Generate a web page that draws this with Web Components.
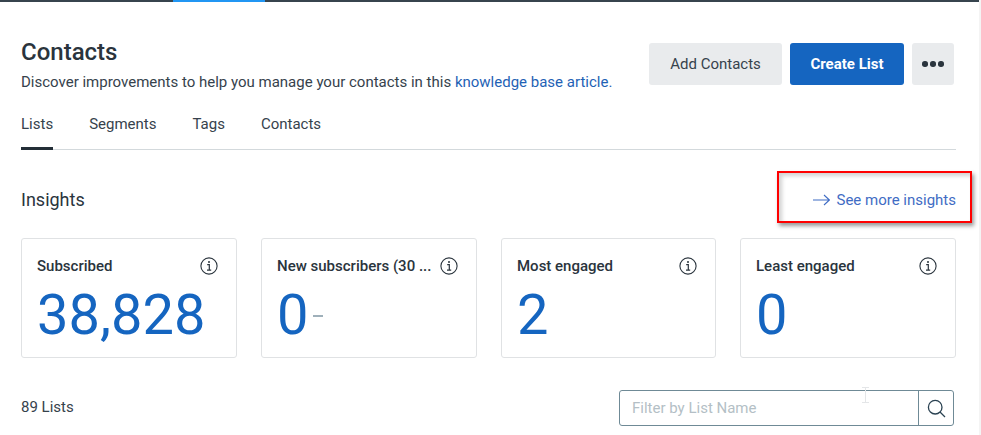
<!DOCTYPE html>
<html>
<head>
<meta charset="utf-8">
<title>Contacts</title>
<style>
  html, body { margin: 0; padding: 0; background: #fff; height: 435px; overflow: hidden; }
  body { font-family: Roboto, "Liberation Sans", sans-serif; color: #2a343d; }
</style>
</head>
<body>
<contacts-page></contacts-page>

<script>
// top strip with the active blue part
class TopStrip extends HTMLElement {
  constructor() {
    super();
    this.attachShadow({ mode: 'open' });
    this.shadowRoot.innerHTML = `
      <style>
        :host { display: flex; height: 2px; background: #37444e; }
        .lead { width: 173px; }
        .active { width: 92px; background: #2196f3; }
      </style>
      <div class="lead"></div><div class="active"></div>
    `;
  }
}
customElements.define('top-strip', TopStrip);

class ActionButton extends HTMLElement {
  constructor() {
    super();
    this.attachShadow({ mode: 'open' });
    this.shadowRoot.innerHTML = `
      <style>
        :host {
          display: flex; align-items: center; justify-content: center;
          height: 42px; box-sizing: border-box; border-radius: 3px;
          background: #e9ebed; color: #36424c; font-size: 15px;
        }
        :host([primary]) { background: #1565c0; color: #fff; font-weight: 700; }
      </style>
      <slot></slot>
    `;
  }
}
customElements.define('action-button', ActionButton);

class TabBar extends HTMLElement {
  constructor() {
    super();
    this.attachShadow({ mode: 'open' });
    this.shadowRoot.innerHTML = `
      <style>
        :host { display: flex; gap: 36px; border-bottom: 1px solid #d3d9dc; font-size: 15px; color: #36424c; height: 44px; box-sizing: border-box; }
        ::slotted(span) { display: block; height: 43px; box-sizing: border-box; padding-top: 8px; line-height: 20px; }
        ::slotted(.on) { border-bottom: 3px solid #232e37; height: 44px; }
      </style>
      <slot></slot>
    `;
  }
}
customElements.define('tab-bar', TabBar);

class StatCard extends HTMLElement {
  constructor() {
    super();
    this.attachShadow({ mode: 'open' });
    this.shadowRoot.innerHTML = `
      <style>
        :host {
          display: block; box-sizing: border-box; height: 120px; padding: 17px 15px 0;
          border: 1px solid #e0e2e4; border-radius: 3px; background: #fff; min-width: 0;
        }
        .head { display: flex; align-items: center; justify-content: space-between; height: 20px; gap: 4px; }
        .label { font-size: 15px; font-weight: 500; color: #2a343d; white-space: nowrap; }
        svg { flex: none; display: block; margin-right: 3px; }
        .value { display: flex; align-items: center; margin-top: 7px; font-size: 56px; line-height: 64px; color: #1565c0; }
        .dash { width: 10px; height: 2px; background: #9fb0ba; margin: 2px 0 0 5px; }
      </style>
      <div class="head">
        <span class="label"></span>
        <svg width="18" height="18" viewBox="0 0 18 18" fill="none" stroke="#2a343d">
          <circle cx="9" cy="9" r="8.1" stroke-width="1.1"/>
          <path d="M7.2 7.6H9.3V13M7 13.2H11.2" stroke-width="1.2"/>
          <circle cx="9" cy="5" r="1" fill="#2a343d" stroke="none"/>
        </svg>
      </div>
      <div class="value"><span class="num"></span></div>
    `;
  }
  connectedCallback() {
    this.shadowRoot.querySelector('.label').textContent = this.getAttribute('label');
    this.shadowRoot.querySelector('.num').textContent = this.getAttribute('value');
    if (this.hasAttribute('dash') && !this.shadowRoot.querySelector('.dash')) {
      const d = document.createElement('span');
      d.className = 'dash';
      this.shadowRoot.querySelector('.value').appendChild(d);
    }
  }
}
customElements.define('stat-card', StatCard);

class FilterBox extends HTMLElement {
  constructor() {
    super();
    this.attachShadow({ mode: 'open' });
    this.shadowRoot.innerHTML = `
      <style>
        :host {
          display: flex; width: 335px; height: 36px; box-sizing: border-box;
          border: 1px solid #6f8a96; border-radius: 3px; background: #fff;
        }
        .ph { flex: 1; padding-left: 12px; font-size: 15px; line-height: 34px; color: #b4bfc6; }
        .btn { width: 34px; border-left: 1px solid #6f8a96; display: flex; align-items: center; justify-content: center; }
      </style>
      <div class="ph">Filter by List Name</div>
      <div class="btn">
        <svg width="19" height="19" viewBox="0 0 19 19" fill="none" stroke="#2a4252" stroke-width="1.3">
          <circle cx="8.2" cy="8.2" r="6.8"/>
          <path d="M13 13L18 18"/>
        </svg>
      </div>
    `;
  }
}
customElements.define('filter-box', FilterBox);

class ContactsPage extends HTMLElement {
  constructor() {
    super();
    this.attachShadow({ mode: 'open' });
    this.shadowRoot.innerHTML = `
      <style>
        :host { display: block; }
        main { padding: 36px 25px 0 21px; }
        .header { display: flex; justify-content: space-between; }
        h1 { margin: 0; font-size: 24px; line-height: 28px; font-weight: 500; color: #2a343d; }
        p { margin: 6px 0 0; font-size: 15px; line-height: 20px; color: #36424c; }
        a { color: #1f62b5; text-decoration: none; }
        .actions { display: flex; gap: 8px; margin: 5px 2px 0 0; }
        .add { width: 133px; }
        .create { width: 114px; }
        .more { width: 42px; }
        .dots { display: flex; gap: 2.5px; }
        .dots i { width: 5.5px; height: 5.5px; border-radius: 50%; background: #2a343d; }
        tab-bar { margin-top: 14px; }
        .insights { display: flex; justify-content: space-between; align-items: center; margin-top: 36px; height: 26px; }
        h2 { margin: 0; font-size: 18px; font-weight: 400; color: #2a343d; }
        .more-link { display: flex; align-items: center; gap: 6px; margin-top: 2px; font-size: 15px; color: #3f6cc4; }
        .cards { display: grid; grid-template-columns: 216px 216px 215px 216px; gap: 24px; margin-top: 26px; }
        .foot { display: flex; justify-content: space-between; align-items: center; margin: 32px 2px 0 0; font-size: 15px; color: #36424c; }
        .foot span { position: relative; top: -1px; }
        .mark {
          position: absolute; left: 777px; top: 171px; width: 195px; height: 52px; box-sizing: border-box;
          border: 2px solid #f00; box-shadow: 2px 3px 4px rgba(0,0,0,.4), inset 3px 3px 4px rgba(0,0,0,.18);
        }
        .edge { position: absolute; top: 0; right: 0; bottom: 0; width: 2px; background: #f4f4f4; }
        .cursor { position: absolute; left: 862px; top: 387px; }
      </style>
      <top-strip></top-strip>
      <main>
        <div class="header">
          <div>
            <h1>Contacts</h1>
            <p>Discover improvements to help you manage your contacts in this <a>knowledge base article.</a></p>
          </div>
          <div class="actions">
            <action-button class="add">Add Contacts</action-button>
            <action-button class="create" primary>Create List</action-button>
            <action-button class="more"><span class="dots"><i></i><i></i><i></i></span></action-button>
          </div>
        </div>
        <tab-bar>
          <span class="on">Lists</span><span>Segments</span><span>Tags</span><span>Contacts</span>
        </tab-bar>
        <div class="insights">
          <h2>Insights</h2>
          <div class="more-link">
            <svg width="17" height="12" viewBox="0 0 17 12" fill="none" stroke="#3f6cc4" stroke-width="1.1">
              <path d="M0 6H16.4M11 1L16.4 6L11 11"/>
            </svg>
            <span>See more insights</span>
          </div>
        </div>
        <div class="cards">
          <stat-card label="Subscribed" value="38,828"></stat-card>
          <stat-card label="New subscribers (30 ..." value="0" dash></stat-card>
          <stat-card label="Most engaged" value="2"></stat-card>
          <stat-card label="Least engaged" value="0"></stat-card>
        </div>
        <div class="foot">
          <span>89 Lists</span>
          <filter-box></filter-box>
        </div>
      </main>
      <div class="edge"></div>
      <div class="mark"></div>
      <svg class="cursor" width="7" height="16" viewBox="0 0 7 16" fill="none" stroke="#e4e6e8" stroke-width="1">
        <path d="M0 .5H7M3.5 .5V15.5M0 15.5H7"/>
      </svg>
    `;
  }
}
customElements.define('contacts-page', ContactsPage);
</script>
</body>
</html>
